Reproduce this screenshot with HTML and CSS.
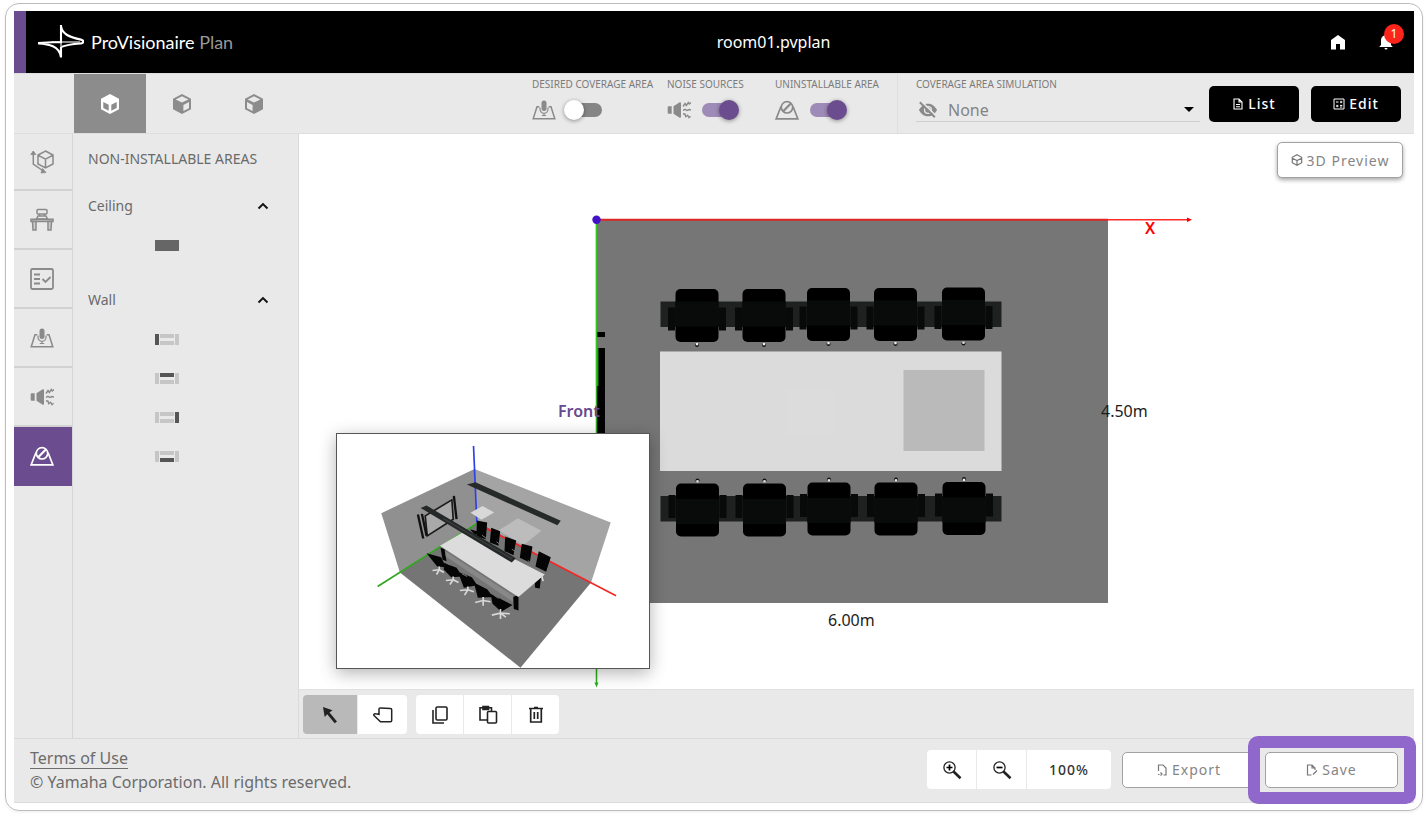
FILE: index.html
```html
<!DOCTYPE html>
<html lang="en">
<head>
<meta charset="utf-8">
<title>room01.pvplan</title>
<link rel="stylesheet" href="styles.css">
</head>
<body>
<svg class="defs" aria-hidden="true">
  <symbol id="i-mic-area" viewBox="0 0 24 24"><path d="M7.300 8.700H5L1.200 20.800h21.600L19 8.700H16.700" fill="none" stroke="currentColor" stroke-width="1.500"/><rect x="9.500" y="2.500" width="5" height="10.500" rx="2.500" fill="currentColor"/><path d="M8 9.500v1.800a4 4 0 0 0 8 0V9.500M12 15.300v2.200M9.800 17.500h4.400" fill="none" stroke="currentColor" stroke-width="1.200"/></symbol>
  <symbol id="i-noise" viewBox="0 0 24 24"><path d="M1.700 8.300h3v7.400h-3a1 1 0 0 1-1-1V9.300a1 1 0 0 1 1-1zM6.500 8.300l6.200-4a1 1 0 0 1 1.300 1v13.400a1 1 0 0 1-1.300 1l-6.200-4z" fill="currentColor"/><path d="M16 8.500l2-3 1.300 2 2-3 1 1.500L24 4.500M16 12.300l2-1 2 1.200 2-1 2 .5M16 15.700l2 .5.7 2.500 2-1.500 1.300 2.500 1.500-1.500" fill="none" stroke="currentColor" stroke-width="1.400"/></symbol>
  <symbol id="i-block" viewBox="0 0 24 24"><path d="M6 8.500L1.200 20.800h21.600L18 8.500" fill="none" stroke="currentColor" stroke-width="1.700"/><circle cx="12" cy="9.300" r="5.700" fill="none" stroke="currentColor" stroke-width="1.700"/><path d="M8.200 13.200L15.800 5.500" stroke="currentColor" stroke-width="2.200"/></symbol>
  <symbol id="i-zoom-lens" viewBox="0 0 20 20"><circle cx="7.500" cy="7.500" r="5.600" fill="none" stroke="currentColor" stroke-width="1.300"/><path d="M11.500 11.500l7 6.800" stroke="currentColor" stroke-width="2.600"/></symbol>
  <symbol id="i-wall-base" viewBox="0 0 24 12"><path d="M0 0h4v11H0zM5 0h14v4H5zM5 7h14v4H5zM20 0h4v11h-4z" fill="#c6c6c6"/></symbol>
  <symbol id="chair" viewBox="-30 -30 60 60" overflow="visible"><path d="M-29-8h7v23h-7zM22-8h7v23h-7z" fill="#080a0a"/><rect x="-21.500" y="-26.500" width="43" height="53" rx="5" fill="#000"/><path d="M-21.500-14h43v25h-43z" fill="#080b0a"/><circle cy="29.500" r="2" fill="#111"/><path d="M-1.200 27.500h2.400v2.300h-2.400z" fill="#eee"/></symbol>
</svg>
<div class="frame">
<div class="app">
  <header class="topbar">
    <div class="brand">
      <svg class="brand-mark" viewBox="0 0 46 34" aria-hidden="true"><path d="M14 17h28" stroke="#aaa" stroke-width="1.600"/><path d="M23 1v30" stroke="#aaa" stroke-width="1.600"/><path d="M0 18L14 17.200H23V0M0 18.500C10 19 22 20.500 23 32.500V22M23.200 2C24.500 10 34 13 43 14.600c3 .6 3 3.700 0 3.800-8 .6-14 1-19.500 3.500" fill="none" stroke="#fff" stroke-width="2.100"/></svg>
      <span class="brand-name">ProVisionaire <span class="brand-sub">Plan</span></span>
    </div>
    <h1 class="doc-title">room01.pvplan</h1>
    <div class="top-actions">
      <button class="top-btn" aria-label="Home"><svg viewBox="0 0 16 16" width="16" height="16"><path d="M1 6l7-5 7 5v9.500H10v-5.500H6v5.500H1z" fill="#fff"/></svg></button>
      <button class="top-btn" aria-label="Notifications"><svg viewBox="0 0 16 16" width="16" height="16"><path d="M8 0a1.200 1.200 0 0 1 1.200 1.300C12 2 13 4 13 6.500v4.500l1.800 2H1.200L3 11V6.500C3 4 4 2 6.800 1.300A1.200 1.200 0 0 1 8 0zM6.500 14h3a1.500 1.500 0 0 1-3 0z" fill="#fff"/></svg><span class="badge">1</span></button>
    </div>
  </header>

  <div class="toolbar">
    <div class="view-tabs">
      <button class="view-tab active" aria-label="Top view"><svg viewBox="0 0 20 22" class="cube"><path d="M10 1l9 4.700v10.600L10 21l-9-4.700V5.700z" fill="#fff"/><path d="M3.300 9l5.400 2.800v6L3.300 15zM16.700 9l-5.400 2.800v6l5.400-2.800z" fill="#8c8c8c"/></svg></button>
      <button class="view-tab" aria-label="Front view"><svg viewBox="0 0 20 22" class="cube"><path d="M10 1l9 4.700v10.600L10 21l-9-4.700V5.700z" fill="#8c8c8c"/><path d="M10 3.200l6.400 3.200-6.400 3.200-6.400-3.200zM17 9l-5.600 2.900v6.200l5.600-2.900z" fill="#e9e9e9"/></svg></button>
      <button class="view-tab" aria-label="Side view"><svg viewBox="0 0 20 22" class="cube"><path d="M10 1l9 4.700v10.600L10 21l-9-4.700V5.700z" fill="#8c8c8c"/><path d="M10 3.200l6.400 3.200-6.400 3.200-6.400-3.200zM3 9l5.600 2.900v6.200L3 15.200z" fill="#e9e9e9"/></svg></button>
    </div>
    <div class="toggles">
      <div class="toggle wide"><label class="caption" for="t1">DESIRED COVERAGE AREA</label><div class="toggle-row"><svg class="icon"><use href="#i-mic-area"/></svg><input id="t1" class="switch" type="checkbox"></div></div>
      <div class="toggle mid"><label class="caption" for="t2">NOISE SOURCES</label><div class="toggle-row"><svg class="icon"><use href="#i-noise"/></svg><input id="t2" class="switch" type="checkbox" checked></div></div>
      <div class="toggle"><label class="caption" for="t3">UNINSTALLABLE AREA</label><div class="toggle-row"><svg class="icon"><use href="#i-block"/></svg><input id="t3" class="switch" type="checkbox" checked></div></div>
    </div>
    <div class="simulation">
      <div class="sim-field">
        <label class="caption" for="sim">COVERAGE AREA SIMULATION</label>
        <div class="sim-row">
          <svg viewBox="0 0 22 18" class="eye-off"><path d="M1 9C4 4 7 2 11 2S18 4 21 9C18 14 15 16 11 16S4 14 1 9z" fill="#8a8a8a"/><circle cx="11" cy="9" r="4.500" fill="#e9e9e9"/><circle cx="11" cy="9" r="3" fill="#8a8a8a"/><path d="M4.300 0L20.500 16" stroke="#e9e9e9" stroke-width="1.800"/><path d="M2 .5L18.500 17" stroke="#8a8a8a" stroke-width="2.200"/></svg>
          <select id="sim" class="sim-select"><option>None</option></select>
          <svg viewBox="0 0 10 5" class="caret"><path d="M0 0h10L5 5z"/></svg>
        </div>
      </div>
      <div class="black-actions">
        <button class="btn dark"><svg viewBox="0 0 10 12" class="btn-icon"><path d="M1 1h5l3 3v7H1zM6 1v3h3M3 6.500h4M3 8.700h4" fill="none" stroke="#fff" stroke-width="1.100"/></svg>List</button>
        <button class="btn dark"><svg viewBox="0 0 12 12" class="btn-icon"><path d="M1 1h10v10H1zM3 4h2.500M7 4h2.300M8.100 2.800v2.400M3 8h2.500M4.200 6.800v2.400M7 7.400h2.300M7 9h2.300" fill="none" stroke="#fff" stroke-width="1"/></svg>Edit</button>
      </div>
    </div>
  </div>

  <main class="body">
    <nav class="rail">
      <button class="rail-btn" aria-label="Room size"><svg class="icon" viewBox="0 0 24 24" fill="none" stroke="currentColor" stroke-width="1.500"><path d="M15.500 1l7.500 4v9l-7.500 4L8 14V5zM8 5.200l7.500 4 7.500-4M15.500 9v9M3.300 1.500v12.700l10 6.800"/><path d="M.8 4.500L3.300 1l2.500 3.500zM12.500 18.500L16 22.500l-5 .5z" fill="currentColor" stroke-width=".8"/></svg></button>
      <button class="rail-btn" aria-label="Furniture"><svg class="icon" viewBox="0 0 24 24" fill="none" stroke="currentColor" stroke-width="1.500"><rect x="7" y="1.500" width="10" height="4.500" rx="1"/><path d="M9.500 6v2M14.500 6v2M8 8h8l1.500 3h-11z"/><path d="M1 11.200h22v2.300H1z" fill="#bbb"/><path d="M2.500 13.500h3.500V22H3zM18 13.500h3.500l-.5 8.500h-3z" fill="#ccc"/></svg></button>
      <button class="rail-btn" aria-label="Requirements"><svg class="icon" viewBox="0 0 24 24" fill="none" stroke="currentColor" stroke-width="1.800"><rect x="1" y="2" width="22" height="20" rx="1.500"/><path d="M4 7.500h6M4 12h6M4 16.500h6M12.500 12l3 3 5-5"/></svg></button>
      <button class="rail-btn" aria-label="Coverage area"><svg class="icon"><use href="#i-mic-area"/></svg></button>
      <button class="rail-btn" aria-label="Noise sources"><svg class="icon"><use href="#i-noise"/></svg></button>
      <button class="rail-btn active" aria-label="Non-installable areas"><svg class="icon"><use href="#i-block"/></svg></button>
    </nav>

    <aside class="panel">
      <h2 class="panel-title">NON-INSTALLABLE AREAS</h2>
      <section class="group">
        <button class="group-head">Ceiling<svg viewBox="0 0 12 8" class="chev"><path d="M1.500 6.500L6 2l4.500 4.500" fill="none" stroke="#111" stroke-width="1.900"/></svg></button>
        <div class="items">
          <button class="item" aria-label="Ceiling area"><svg viewBox="0 0 24 12" class="wall"><path d="M0 0h24v11H0z" fill="#666"/></svg></button>
        </div>
      </section>
      <section class="group">
        <button class="group-head">Wall<svg viewBox="0 0 12 8" class="chev"><path d="M1.500 6.500L6 2l4.500 4.500" fill="none" stroke="#111" stroke-width="1.900"/></svg></button>
        <div class="items">
          <button class="item" aria-label="Left wall"><svg viewBox="0 0 24 12" class="wall"><use href="#i-wall-base"/><path d="M0 0h4v11H0z" fill="#555"/></svg></button>
          <button class="item" aria-label="Back wall"><svg viewBox="0 0 24 12" class="wall"><use href="#i-wall-base"/><path d="M5 0h14v4H5z" fill="#555"/></svg></button>
          <button class="item" aria-label="Right wall"><svg viewBox="0 0 24 12" class="wall"><use href="#i-wall-base"/><path d="M20 0h4v11h-4z" fill="#555"/></svg></button>
          <button class="item" aria-label="Front wall"><svg viewBox="0 0 24 12" class="wall"><use href="#i-wall-base"/><path d="M5 7h14v4H5z" fill="#555"/></svg></button>
        </div>
      </section>
    </aside>

    <div class="workspace">
      <div class="canvas">
        <svg class="plan" viewBox="299 134 1115 555">
          <rect x="597" y="220" width="511" height="383" fill="#767676"/>
          <path d="M597 332h8v5h-8zM598 348h7v38h-7zM597 386h8v90h-8z" fill="#000"/>
          <path d="M597 348h1.500v38H597z" fill="#38803a"/>
          <path d="M596.500 220v166" stroke="#2fc41c" stroke-width="1.700"/>
          <path d="M596.500 386V684" stroke="#2fa91c" stroke-width="1.500"/>
          <path d="M594.500 682.500h4l-2 5z" fill="#22b512"/>
          <path d="M596 219.700h512" stroke="#e02424" stroke-width="2"/>
          <path d="M1108 219.700h81" stroke="#ff2b2b" stroke-width="1.500"/>
          <path d="M1187 217.500v4.400l5-2.200z" fill="#f00000"/>
          <circle cx="596.500" cy="219.700" r="4.200" fill="#4112c8"/>
          <path d="M660.500 301.500H1001.500V327H660.500zM660.500 496H1001.500V521.500H660.500z" fill="#1f2121"/>
          <use href="#chair" x="667" y="285.500" width="60" height="60"/>
          <use href="#chair" x="734" y="285.500" width="60" height="60"/>
          <use href="#chair" x="798.500" y="284.500" width="60" height="60"/>
          <use href="#chair" x="865.500" y="284.500" width="60" height="60"/>
          <use href="#chair" x="933.500" y="284" width="60" height="60"/>
          <g transform="matrix(1 0 0 -1 0 826)">
            <use href="#chair" x="667.500" y="286" width="60" height="60"/>
            <use href="#chair" x="734.500" y="286" width="60" height="60"/>
            <use href="#chair" x="799" y="287" width="60" height="60"/>
            <use href="#chair" x="866" y="287" width="60" height="60"/>
            <use href="#chair" x="934" y="287.500" width="60" height="60"/>
          </g>
          <rect x="660" y="351.500" width="341.500" height="119.500" fill="#dbdbdb"/>
          <rect x="787" y="388" width="48" height="48" fill="#dcdcdc"/>
          <rect x="903.500" y="370" width="81" height="81" fill="#bababa"/>
          <text x="558" y="417" class="plan-text front">Front</text>
          <text x="1101" y="417" class="plan-text">4.50m</text>
          <text x="828" y="626" class="plan-text">6.00m</text>
          <text x="1145" y="234" class="plan-text axis">X</text>
        </svg>
        <button class="btn light preview-btn"><svg viewBox="0 0 12 12" class="btn-icon" fill="none" stroke="#777" stroke-width="1.200"><path d="M6 .8l4.700 2.500v5.400L6 11.200 1.300 8.700V3.300zM1.300 4.300L6 6.500l4.700-2.200M6 6.500v4"/></svg>3D Preview</button>
        <div class="mini">
          <svg viewBox="21 27 937 701" class="mini-scene">
            <path d="M154 264L434 131 443 290 210 442z" fill="#909090"/>
            <path d="M434 131L843 292 784 472 443 290z" fill="#a4a4a4"/>
            <path d="M210 442L443 290 784 472 572 728z" fill="#757575"/>
            <path d="M564 279l71 38-54 43-75-44z" fill="#bcbcbc"/>
            <path d="M431 62L441 292" stroke="#2f3fe8" stroke-width="5"/>
            <path d="M143 484L441 295" stroke="#33a522" stroke-width="5"/>
            <path d="M441 295L859 512" stroke="#f02828" stroke-width="5"/>
            <path d="M422 263l36-21 35 20-38 22z" fill="#d8d8d8"/>
            <path d="M411 178l26-7 256 116-10 13z" fill="#262a29"/>
            <path d="M286 272L366 224 370 282 292 332z" fill="#a9a9a9" stroke="#1a1a1a" stroke-width="5"/>
            <path d="M372 212l8 70M264 268l16 72M276 266l14 66" stroke="#111" stroke-width="7"/>
            <g fill="#050505">
              <path d="M441 286l31 6-4 50-28-8zM420 312l22 6-4 14zM484 308l27 10-5 44-26-10zM526 334l33 12-8 44-27-12zM576 356l32 8-8 48-30-14zM627 378l36 18-14 44-32-16z"/>
              <path d="M290 384l44 12 14 30-26-2zM340 412l40 16 18 26-34 2-22-22zM384 440l42 16 16 24-40 8zM432 472l40 20 18 24-46 2zM482 506l66 34-34 20-26-24z"/>
              <path d="M332 368l12 4 6 36-12-4zM550 516l16-6v46l-14-4zM614 460l20-6-4 36-14-2z"/>
            </g>
            <g stroke="#777" stroke-width="3" fill="none"><path d="M456 330l20 14M500 350l20 14M546 372l18 12M594 406l16 12M350 414l12 6M396 446l16 8M444 474l16 8M492 510l14 10"/></g>
            <path d="M346 378L550 512 550 530 348 394z" fill="#888"/>
            <path d="M330 362L398 322 645 448 566 516z" fill="#dcdcdc"/>
            <path d="M272 248l18-7 268 158-12 13z" fill="#252828"/>
            <path d="M340 280l206 121" stroke="#3c3f3f" stroke-width="4"/>
            <g stroke="#d8d8d8" stroke-width="5" fill="none"><path d="M328 424v10l-20 2M328 434l14 8M328 434l-8 14M370 454v10l-22 2M370 464l16 8M370 464l-10 14M414 484v10l-24 2M414 494l18 6M414 494l-10 16M460 516v10l-24 6M460 526l22 4M460 526v16M512 552v12l-26 6M512 564l28 2M512 564v18M512 564l16 12M636 452l4 16"/></g>
          </svg>
        </div>
      </div>
      <div class="edit-strip">
        <div class="btn-group">
          <button class="tool wide-tool active" aria-label="Select"><svg viewBox="0 0 20 20" class="tool-icon"><path d="M3 2l9.500 3.200-3 2.300 7.500 9-2.300 1.800-7.500-9-2.500 2.700z" fill="#222"/></svg></button>
          <button class="tool" aria-label="Pan"><svg viewBox="0 0 20 20" class="tool-icon" fill="none" stroke="#222" stroke-width="1.500"><path d="M6 9V4.300c0-.8.400-1.300 1.300-1.300L17.500 3.500c.8 0 1.200.6 1.200 1.300V15.500c0 .8-.5 1.200-1.300 1.200H7.500L1 10.500c-.6-.8.200-2 1.500-1.700L6 9.300V6"/></svg></button>
        </div>
        <div class="btn-group">
          <button class="tool" aria-label="Copy"><svg viewBox="0 0 20 20" class="tool-icon" fill="none" stroke="#222" stroke-width="1.600"><rect x="6" y="2" width="11" height="13" rx="1.200"/><path d="M3 5v13h11"/></svg></button>
          <button class="tool" aria-label="Paste"><svg viewBox="0 0 20 20" class="tool-icon" fill="none" stroke="#222" stroke-width="1.600"><path d="M9 15H2V2.700H13.500V6"/><path d="M5 1.500h5.500V4.500H5z" fill="#222"/><rect x="9.500" y="6.500" width="9" height="11.500" rx="1"/></svg></button>
          <button class="tool" aria-label="Delete"><svg viewBox="0 0 20 20" class="tool-icon" fill="none" stroke="#222" stroke-width="1.700"><path d="M3 3.500h14M8 2.500h4M4.700 3.500V17h10.600V3.500M8.300 7v7M11.700 7v7"/></svg></button>
        </div>
      </div>
    </div>
  </main>

  <footer class="footer">
    <div class="legal">
      <a class="terms" href="#">Terms of Use</a>
      <p class="copyright">© Yamaha Corporation. All rights reserved.</p>
    </div>
    <div class="footer-actions">
      <div class="btn-group zoom">
        <button class="tool" aria-label="Zoom in"><svg viewBox="0 0 20 20" class="tool-icon"><use href="#i-zoom-lens"/><path d="M4.500 7.500h6M7.500 4.500v6" stroke="#000" stroke-width="1.700"/></svg></button>
        <button class="tool" aria-label="Zoom out"><svg viewBox="0 0 20 20" class="tool-icon"><use href="#i-zoom-lens"/><path d="M4.500 7.500h6" stroke="#000" stroke-width="1.700"/></svg></button>
        <button class="tool zoom-value">100%</button>
      </div>
      <button class="btn light foot-btn"><svg viewBox="0 0 10 12" class="btn-icon" fill="none" stroke="#777" stroke-width="1.200"><path d="M1.500 7V1h4.500l3 3v7H6.500M1 10.500h1.500M3.500 8.500L5 10l-1.500 1.500"/></svg>Export</button>
      <div class="spotlight">
        <button class="btn light foot-btn"><svg viewBox="0 0 12 12" class="btn-icon" fill="none" stroke="#777" stroke-width="1.200"><path d="M5.500 11h-4V1h4.500l3 3v2M6 1v3h3M7 10.500L11 6.500"/></svg>Save</button>
      </div>
    </div>
  </footer>
</div>
</div>
</body>
</html>
```
FILE: styles.css
```css
* { box-sizing: border-box; }
body {
  margin: 0;
  min-height: 100vh;
  padding: 3px 5px 7px;
  display: flex;
  background: #fff;
  font-family: "Noto Sans", "Open Sans", sans-serif;
  color: #6a6a6a;
}
button, select { font: inherit; color: inherit; border: 0; background: none; padding: 0; margin: 0; }
h1, h2, p { margin: 0; font-weight: 400; }
.defs { position: absolute; width: 0; height: 0; }

.frame {
  flex: 1;
  display: flex;
  padding: 7px 8px;
  border: 1px solid #bdbdbd;
  border-radius: 14px;
  box-shadow: 0 1px 3px rgba(0, 0, 0, .08);
}
.app { flex: 1; min-width: 0; display: flex; flex-direction: column; background: #e9e9e9; border-bottom: 1px solid #dcdcdc; }

/* Top bar */
.topbar {
  height: 62px;
  flex: none;
  display: grid;
  grid-template-columns: auto 1fr auto;
  align-items: center;
  padding: 0 20px 0 12px;
  border-left: 12px solid #6b4d8f;
  background: #000;
  color: #fff;
}
.brand { display: flex; align-items: center; gap: 7px; }
.brand-mark { width: 46px; height: 34px; }
.brand-name { font-family: Lato, "Open Sans", sans-serif; font-size: 18px; line-height: 24px; white-space: nowrap; }
.brand-sub { color: #999; }
.doc-title { font-size: 16px; line-height: 24px; text-align: center; }
.top-actions { display: flex; justify-content: flex-end; gap: 32px; padding-left: 16px; }
.top-btn { position: relative; width: 16px; height: 16px; }
.top-btn svg { display: block; }
.badge {
  position: absolute;
  top: -10px;
  left: 6px;
  width: 20px;
  height: 20px;
  border-radius: 50%;
  background: #fc241b;
  color: #fff;
  font-size: 12px;
  line-height: 20px;
  text-align: center;
}

/* Toolbar */
.toolbar {
  height: 61px;
  flex: none;
  display: flex;
  justify-content: flex-end;
  border: 1px solid #dedede;
  border-left: 0;
  border-right: 0;
}
.view-tabs { display: flex; margin-right: auto; padding-left: 60px; }
.view-tab { width: 72px; display: flex; align-items: center; justify-content: center; }
.view-tab.active { background: #8c8c8c; }
.cube { width: 20px; height: 22px; }
.toggles { display: flex; gap: 16px; padding-right: 20px; }
.toggle { width: 102px; }
.toggle.wide { width: 119px; }
.toggle.mid { width: 92px; }
.caption { display: block; padding-top: 3px; font-size: 10px; line-height: 14px; white-space: nowrap; color: #7b7b7b; }
.toggle-row { display: flex; align-items: center; gap: 8px; height: 38px; }
.icon { width: 24px; height: 24px; color: #8a8a8a; }
.switch {
  appearance: none;
  position: relative;
  width: 40px;
  height: 20px;
  margin: 0;
}
.switch::before {
  content: "";
  position: absolute;
  left: 3px;
  top: 3px;
  width: 35px;
  height: 14px;
  border-radius: 7px;
  background: #858585;
}
.switch::after {
  content: "";
  position: absolute;
  left: 0;
  top: 0;
  width: 20px;
  height: 20px;
  border-radius: 50%;
  background: #fff;
  box-shadow: 0 1px 4px rgba(0, 0, 0, .4);
}
.switch:checked::before { background: #9f8bb7; }
.switch:checked::after { left: 20px; background: #6b4d8f; }
.simulation { display: flex; gap: 9px; padding: 0 13px 0 18px; border-left: 1px solid #dfdfdf; }
.sim-field { width: 284px; }
.sim-row { position: relative; display: flex; align-items: center; height: 31px; border-bottom: 1px solid #cfcfcf; padding-top: 7px; }
.eye-off { position: absolute; left: 2px; width: 20px; height: 18px; pointer-events: none; }
.sim-select { appearance: none; width: 100%; height: 24px; padding-left: 32px; font-size: 16px; line-height: 24px; color: #848484; }
.caret { position: absolute; right: 6px; width: 10px; height: 5px; pointer-events: none; }
.black-actions { display: flex; align-items: center; gap: 12px; }

/* Buttons */
.btn {
  display: flex;
  align-items: center;
  justify-content: center;
  gap: 4px;
  height: 36px;
  border-radius: 5px;
  font-size: 14px;
  letter-spacing: 1px;
  white-space: nowrap;
}
.btn-icon { width: 12px; height: 12px; flex: none; }
.btn.dark { width: 90px; background: #000; color: #fff; font-weight: 500; }
.btn.light { background: #fff; border: 1px solid #a2a2a2; color: #858585; }

/* Body */
.body { flex: 1; min-height: 0; display: flex; }
.rail { width: 59px; flex: none; border-right: 1px solid #d6d6d6; }
.rail-btn { display: flex; align-items: center; justify-content: center; width: 58px; height: 59px; padding-right: 3px; border-bottom: 2px solid #d2d2d2; }
.rail-btn:first-child { height: 57px; }
.rail-btn.active { background: #6b4d8f; border-bottom-color: #6b4d8f; }
.rail-btn.active .icon { color: #fff; }
.panel { width: 226px; flex: none; padding: 14px 29px 0 15px; border-right: 1px solid #dadada; }
.panel-title { font-size: 14px; line-height: 22px; white-space: nowrap; }
.group { padding-top: 25px; }
.group-head { display: flex; align-items: center; justify-content: space-between; width: 100%; font-size: 14px; line-height: 22px; }
.chev { width: 12px; height: 8px; }
.items { display: flex; flex-direction: column; align-items: center; gap: 27px; padding: 23px 23px 0 0; }
.group + .group { padding-top: 37px; }
.item { display: block; height: 12px; }
.wall { display: block; width: 24px; height: 12px; }
.workspace { flex: 1; min-width: 0; display: flex; flex-direction: column; }
.canvas { position: relative; flex: 1; min-height: 0; overflow: hidden; background: #fff; }
.plan { position: absolute; inset: 0; width: 100%; height: 100%; }
.plan-text { font-size: 16px; fill: #1c1c1c; }
.plan-text.front { font-weight: 600; fill: #674a8e; }
.plan-text.axis { font-weight: 600; fill: #f00; }
.preview-btn { position: absolute; top: 8px; right: 11px; width: 126px; box-shadow: 0 2px 4px rgba(0, 0, 0, .35); }
.mini { position: absolute; left: 37px; bottom: 20px; width: 314px; height: 236px; border: 1px solid #555; background: #fff; box-shadow: 0 4px 16px rgba(0, 0, 0, .3); }
.mini-scene { display: block; width: 100%; height: 100%; }
.edit-strip { flex: none; display: flex; gap: 9px; padding: 5px 4px 4px; border-top: 1px solid #e0e0e0; }
.btn-group { display: flex; gap: 1px; border-radius: 4px; overflow: hidden; }
.tool { display: flex; align-items: center; justify-content: center; width: 47px; height: 39px; background: #fff; }
.tool.wide-tool { width: 54px; background: #b9b9b9; }
.wide-tool + .tool { width: 49px; }
.tool-icon { width: 20px; height: 20px; color: #222; }

/* Footer */
.footer { flex: none; height: 64px; display: flex; align-items: center; justify-content: space-between; padding: 0 16px 2px; border-top: 1px solid #d9d9d9; }
.legal { font-size: 16px; line-height: 24px; color: #6c6c6c; }
.terms { display: inline-block; line-height: 20px; color: inherit; text-decoration: none; border-bottom: 1px solid #6c6c6c; }
.footer-actions { display: flex; align-items: center; gap: 10px; }
.zoom { margin-right: 1px; }
.zoom .tool { width: 49px; }
.zoom .zoom-value { width: 84px; font-size: 14px; letter-spacing: 1px; color: #333; font-weight: 500; }
.foot-btn { width: 133px; }
.spotlight { position: relative; }
.spotlight::before {
  content: "";
  position: absolute;
  inset: -16px -18px -16px -17px;
  border: 12px solid #9068cc;
  border-radius: 10px;
  background: #e9e9e9;
}
.spotlight .btn { position: relative; }
```
